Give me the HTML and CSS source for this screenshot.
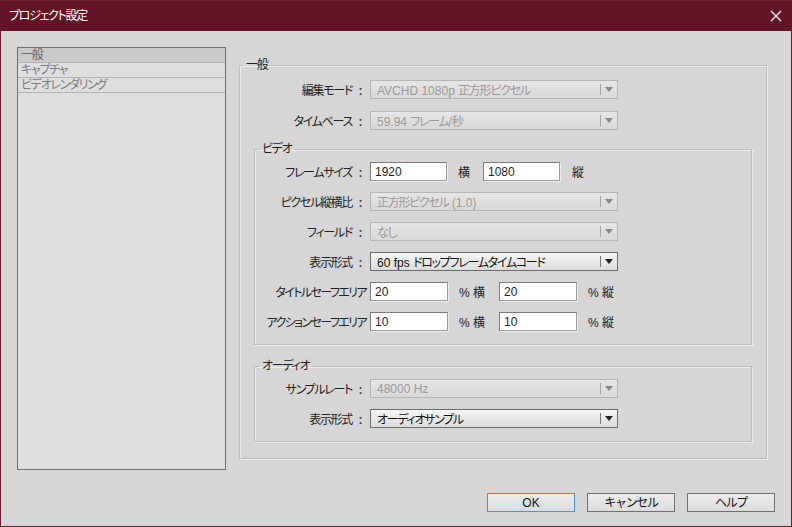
FILE: index.html
```html
<!DOCTYPE html>
<html lang="ja">
<head>
<meta charset="utf-8">
<title>プロジェクト設定</title>
<link rel="stylesheet" href="styles.css">
</head>
<body>
<div class="window">
  <div class="titlebar">
    <span class="title ja">プロジェクト設定</span>
    <svg class="close" width="12" height="12" viewBox="0 0 12 12"><path d="M1 1 L11 11 M11 1 L1 11" stroke="#fff" stroke-width="1.2" fill="none"/></svg>
  </div>
  <div class="content">
    <div class="main">
      <ul class="list ja">
        <li class="selected">一般</li>
        <li>キャプチャ</li>
        <li>ビデオレンダリング</li>
      </ul>
      <fieldset class="group outer">
        <legend class="ja">一般</legend>
        <div class="row first">
          <span class="label ja">編集モード<span class="colon">:</span></span>
          <div class="select disabled"><span class="val">AVCHD 1080p <span class="ja">正方形ピクセル</span></span><span class="arrow"></span></div>
        </div>
        <div class="row">
          <span class="label ja">タイムベース<span class="colon">:</span></span>
          <div class="select disabled"><span class="val">59.94 <span class="ja">フレーム</span>/<span class="ja">秒</span></span><span class="arrow"></span></div>
        </div>
        <fieldset class="group inner video">
          <legend class="ja">ビデオ</legend>
          <div class="row first">
            <span class="label ja">フレームサイズ<span class="colon">:</span></span>
            <input class="field short" type="text" value="1920">
            <span class="unit u1">横</span>
            <input class="field short" type="text" value="1080">
            <span class="unit u2">縦</span>
          </div>
          <div class="row second">
            <span class="label ja">ピクセル縦横比<span class="colon">:</span></span>
            <div class="select disabled"><span class="val"><span class="ja">正方形ピクセル</span> (1.0)</span><span class="arrow"></span></div>
          </div>
          <div class="row">
            <span class="label ja">フィールド<span class="colon">:</span></span>
            <div class="select disabled"><span class="val ja">なし</span><span class="arrow"></span></div>
          </div>
          <div class="row">
            <span class="label ja">表示形式<span class="colon">:</span></span>
            <div class="select"><span class="val">60 fps <span class="ja">ドロップフレームタイムコード</span></span><span class="arrow"></span></div>
          </div>
          <div class="row">
            <span class="label ja nocolon">タイトルセーフエリア</span>
            <input class="field pct" type="text" value="20">
            <span class="unit p1">% 横</span>
            <input class="field pct" type="text" value="20">
            <span class="unit p2">% 縦</span>
          </div>
          <div class="row">
            <span class="label ja nocolon">アクションセーフエリア</span>
            <input class="field pct" type="text" value="10">
            <span class="unit p1">% 横</span>
            <input class="field pct" type="text" value="10">
            <span class="unit p2">% 縦</span>
          </div>
        </fieldset>
        <fieldset class="group inner audio">
          <legend class="ja">オーディオ</legend>
          <div class="row first">
            <span class="label ja">サンプルレート<span class="colon">:</span></span>
            <div class="select disabled"><span class="val">48000 Hz</span><span class="arrow"></span></div>
          </div>
          <div class="row">
            <span class="label ja">表示形式<span class="colon">:</span></span>
            <div class="select"><span class="val ja">オーディオサンプル</span><span class="arrow"></span></div>
          </div>
        </fieldset>
      </fieldset>
    </div>
    <div class="buttons">
      <button class="btn default">OK</button>
      <button class="btn ja">キャンセル</button>
      <button class="btn ja">ヘルプ</button>
    </div>
  </div>
</div>
</body>
</html>
```
FILE: styles.css
```css
* { box-sizing: border-box; }
html, body { margin: 0; padding: 0; }
body {
  width: 792px;
  height: 527px;
  overflow: hidden;
  font-family: "Liberation Sans", "Noto Sans CJK JP", sans-serif;
  font-size: 12px;
  font-feature-settings: "palt";
  color: #1e1e1e;
  background: #d6d6d6;
}
.ja { letter-spacing: -1.3px; }
.window {
  width: 792px;
  height: 527px;
  display: flex;
  flex-direction: column;
  border: 1px solid #6a1d2f;
  border-top: none;
  background: #d6d6d6;
}
.titlebar {
  height: 31px;
  margin: 0 -1px;
  background: #621527;
  border-top: 1px solid #6e2537;
  display: flex;
  align-items: center;
  justify-content: space-between;
  padding: 0 10px 0 9px;
  color: #fff;
}
.title { font-size: 12px; line-height: 14px; }
.close { display: block; }
.content {
  flex: 1;
  display: flex;
  flex-direction: column;
}
.main {
  display: flex;
  gap: 13px;
  padding: 16px 24px 0 16px;
  align-items: flex-start;
}
.list {
  list-style: none;
  margin: 0;
  padding: 0;
  width: 209px;
  height: 423px;
  border: 1px solid #6f6f6f;
  background: #dedede;
}
.list li {
  height: 15px;
  line-height: 14px;
  padding-left: 3px;
  border-bottom: 1px solid #b4b4b4;
  color: #7c7c7c;
}
.list li.selected { background: #c9c9c9; color: #6a6a6a; }

.group {
  margin: 0;
  border: 1px solid #bdbdbd;
  box-shadow: 1px 1px 0 #ececec, inset 1px 1px 0 #ececec;
  min-width: 0;
}
.group legend {
  padding: 0 3px;
  margin-left: 4px;
  line-height: 14px;
  font-size: 12px;
  color: #1e1e1e;
}
.outer {
  flex: 1;
  margin-top: 11px;
  height: 401px;
  padding: 0 14px 0 14px;
}
.outer > legend { margin-left: -11px; }
.inner { padding: 0 0 13px 0; }
.video { margin-top: 12px; }
.audio { margin-top: 14px; }

.row {
  display: flex;
  align-items: center;
  height: 19px;
  margin-top: 11px;
}
.outer > .row { margin-top: 12px; }
.row.first { margin-top: 6px; }
.outer > .row.first { margin-top: 8px; }
.label {
  width: 116px;
  text-align: right;
  padding-right: 1px;
  white-space: nowrap;
  color: #222;
}
.inner .label { width: 115px; }
.label.nocolon { padding-right: 4px; letter-spacing: -1.6px; }
.colon {
  display: inline-block;
  width: 17px;
  text-align: center;
  letter-spacing: 0;
  font-weight: bold;
  color: #3a3a3a;
}

.select {
  width: 248px;
  height: 19px;
  display: flex;
  align-items: center;
  border: 1px solid #6c6c6c;
  background: linear-gradient(#f6f6f6, #dcdcdc);
  color: #111;
  padding-left: 6px;
}
.select .val { flex: 1; white-space: nowrap; }
.select .arrow {
  width: 17px;
  height: 11px;
  border-left: 1px solid #777;
  position: relative;
}
.select .arrow::after {
  content: "";
  position: absolute;
  left: 4px;
  top: 3px;
  border-left: 4px solid transparent;
  border-right: 4px solid transparent;
  border-top: 5px solid #222;
}
.select.disabled {
  border-color: #b6b6b6;
  background: linear-gradient(#e6e6e6, #d8d8d8);
  color: #9a9a9a;
}
.select.disabled .arrow { border-left-color: #a5a5a5; }
.select.disabled .arrow::after { border-top-color: #8a8a8a; }

.field {
  height: 19px;
  border: 1px solid #7a7a7a;
  border-right-color: #9c9c9c;
  border-bottom-color: #9c9c9c;
  box-shadow: 1px 1px 0 #ededed;
  background: #fff;
  font: inherit;
  color: #1e1e1e;
  padding: 0 4px;
  margin: 0;
  outline: none;
}
.field.short { width: 77px; }
.field.pct { width: 78px; }
.unit { color: #222; white-space: nowrap; }
.u1 { margin: 0 13px 0 11px; }
.u2 { margin-left: 12px; }
.p1 { margin: 0 14px 0 11px; }
.p2 { margin-left: 11px; }

.buttons {
  display: flex;
  justify-content: flex-end;
  gap: 12px;
  padding: 23px 16px 0 0;
}
.btn {
  width: 88px;
  height: 19px;
  border: 1px solid #707070;
  background: linear-gradient(#ececec, #dcdcdc);
  font-family: inherit;
  font-size: 12px;
  color: #111;
  padding: 0;
  line-height: 16px;
}
.btn.default { border-color: #3d9ae0; letter-spacing: 0; }
```
